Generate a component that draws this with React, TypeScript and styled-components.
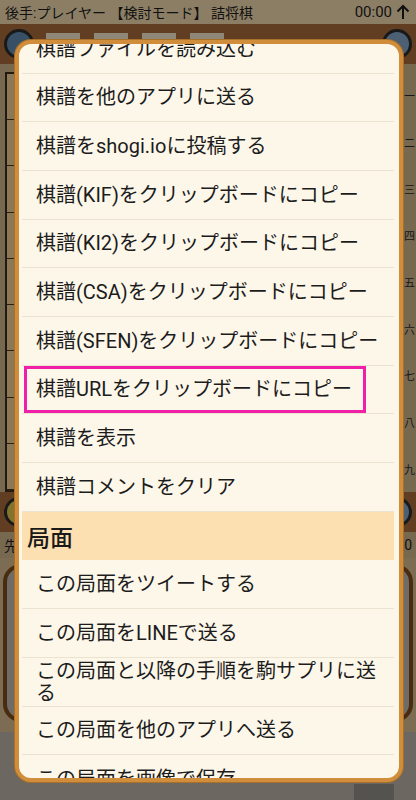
import { useLayoutEffect, useRef } from "react";
import styled, { createGlobalStyle } from "styled-components";

const GlobalStyle = createGlobalStyle`
  html, body {
    margin: 0;
    padding: 0;
    background: #2b2218;
  }
  body {
    font-family: Roboto, "Noto Sans CJK JP", sans-serif;
  }
`;

const Screen = styled.div`
  position: relative;
  width: 416px;
  height: 800px;
  overflow: hidden;
  display: flex;
  flex-direction: column;
  background: #cdb48a;
`;

const StatusBar = styled.div`
  height: 24px;
  display: flex;
  align-items: center;
  justify-content: space-between;
  padding: 0 6px 0 5px;
  background: #ead3a8;
  color: #1c1c1c;
  font-size: 14px;
  white-space: nowrap;
`;

const Clock = styled.div`
  display: flex;
  align-items: center;
  gap: 4px;
  font-size: 15px;
`;

const HandRow = styled.div`
  height: 40px;
  display: flex;
  align-items: center;
  justify-content: space-between;
  padding: 0 4px;
  background: #a26838;
`;

const Avatar = styled.div<{ $tone: string }>`
  width: 30px;
  height: 30px;
  border-radius: 50%;
  border: 3px solid #2a2a2a;
  background: ${(p) => p.$tone};
  box-sizing: border-box;
`;

const Pieces = styled.div`
  flex: 1;
  display: flex;
  gap: 14px;
  padding: 0 12px;
`;

const Piece = styled.div`
  width: 34px;
  height: 22px;
  background: #efe2c6;
`;

const BoardArea = styled.div`
  height: 420px;
  display: flex;
  padding: 8px 0 0 5px;
  background: #c7ae86;
`;

const Board = styled.div`
  flex: 1;
  border: 2px solid #3b2a18;
  background: #e6c98f;
  display: grid;
  grid-template-columns: repeat(9, 1fr);
  grid-template-rows: repeat(9, 1fr);
`;

const Cell = styled.div`
  border-right: 1px solid #4a3520;
  border-bottom: 1px solid #4a3520;
`;

const Ranks = styled.div`
  width: 13px;
  display: grid;
  grid-template-rows: repeat(9, 1fr);
  align-items: center;
  justify-items: center;
  color: #2a2a2a;
  font-size: 11px;
`;

const InfoRow = styled.div`
  height: 26px;
  display: flex;
  align-items: center;
  justify-content: space-between;
  padding: 0 4px;
  font-size: 14px;
  color: #1c1c1c;
  background: #c7ae86;
`;

const CommentBox = styled.div`
  height: 150px;
  margin: 6px 3px 0;
  border: 4px solid #7a4a1a;
  border-radius: 18px;
  background: #b9b3aa;
`;

const Toolbar = styled.div`
  flex: 1;
  display: flex;
  align-items: flex-end;
  justify-content: flex-end;
  margin: 10px 0 0;
  padding: 0 22px 0 0;
  background: #b4aca2;
`;

const ToolButton = styled.div`
  width: 40px;
  height: 16px;
  background: #8e8a86;
`;

const Scrim = styled.div`
  position: absolute;
  inset: 0;
  background: rgba(0, 0, 0, 0.4);
`;

const Dialog = styled.div`
  position: absolute;
  left: 15px;
  top: 40px;
  width: 388px;
  height: 742px;
  box-sizing: border-box;
  border: 4px solid #d08d3b;
  border-radius: 16px;
  background: #fdf7ea;
  box-shadow: 0 0 0 1px #a8702a;
  overflow: hidden;
`;

const List = styled.div`
  height: 100%;
  overflow-y: auto;
  padding: 0 5px 0 3px;
  scrollbar-width: none;
  &::-webkit-scrollbar {
    display: none;
  }
`;

const Item = styled.div`
  position: relative;
  box-sizing: border-box;
  min-height: 48.67px;
  display: flex;
  align-items: center;
  padding: 2px 14px;
  border-bottom: 1px solid #ebe2d0;
  color: #1c1c1c;
  font-size: 20px;
  line-height: 22px;
`;

const Header = styled.div`
  box-sizing: border-box;
  height: 48.67px;
  display: flex;
  align-items: center;
  padding: 0 5px;
  background: #fde0b2;
  color: #1a1a1a;
  font-size: 23px;
  font-weight: 500;
`;

const Mark = styled.div`
  position: absolute;
  left: 2px;
  right: 28px;
  top: 0;
  bottom: 0;
  border: 3px solid #f01fa8;
  pointer-events: none;
`;

const kifuItems = [
  "棋譜ファイルを読み込む",
  "棋譜を他のアプリに送る",
  "棋譜をshogi.ioに投稿する",
  "棋譜(KIF)をクリップボードにコピー",
  "棋譜(KI2)をクリップボードにコピー",
  "棋譜(CSA)をクリップボードにコピー",
  "棋譜(SFEN)をクリップボードにコピー",
  "棋譜URLをクリップボードにコピー",
  "棋譜を表示",
  "棋譜コメントをクリア",
];

const positionItems = [
  "この局面をツイートする",
  "この局面をLINEで送る",
  "この局面と以降の手順を駒サプリに送る",
  "この局面を他のアプリへ送る",
  "この局面を画像で保存",
];

const ranks = ["一", "二", "三", "四", "五", "六", "七", "八", "九"];

const ArrowUp = () => (
  <svg width="14" height="16" viewBox="0 0 14 16">
    <path d="M7 15V2M1.5 7.5L7 2l5.5 5.5" stroke="#1c1c1c" strokeWidth="2" fill="none" />
  </svg>
);

export default function App() {
  const listRef = useRef<HTMLDivElement>(null);

  useLayoutEffect(() => {
    if (listRef.current) listRef.current.scrollTop = 19;
  }, []);

  return (
    <>
      <GlobalStyle />
      <Screen>
        <StatusBar>
          <span>後手:プレイヤー 【検討モード】 詰将棋</span>
          <Clock>
            00:00 <ArrowUp />
          </Clock>
        </StatusBar>
        <HandRow>
          <Avatar $tone="#5d86a8" />
          <Pieces>
            <Piece />
            <Piece />
            <Piece />
            <Piece />
          </Pieces>
          <Avatar $tone="#7f9fc0" />
        </HandRow>
        <BoardArea>
          <Board>
            {Array.from({ length: 81 }, (_, i) => (
              <Cell key={i} />
            ))}
          </Board>
          <Ranks>
            {ranks.map((r) => (
              <span key={r}>{r}</span>
            ))}
          </Ranks>
        </BoardArea>
        <HandRow>
          <Avatar $tone="#d9c24a" />
          <Pieces />
          <Avatar $tone="#7f9fc0" />
        </HandRow>
        <InfoRow>
          <span>先手:プレイヤー</span>
          <span>0:00</span>
        </InfoRow>
        <CommentBox />
        <Toolbar>
          <ToolButton />
        </Toolbar>
        <Scrim />
        <Dialog>
          <List ref={listRef}>
            {kifuItems.map((t) => (
              <Item key={t}>
                {t}
                {t.startsWith("棋譜URL") && <Mark />}
              </Item>
            ))}
            <Header>局面</Header>
            {positionItems.map((t) => (
              <Item key={t}>{t}</Item>
            ))}
          </List>
        </Dialog>
      </Screen>
    </>
  );
}
